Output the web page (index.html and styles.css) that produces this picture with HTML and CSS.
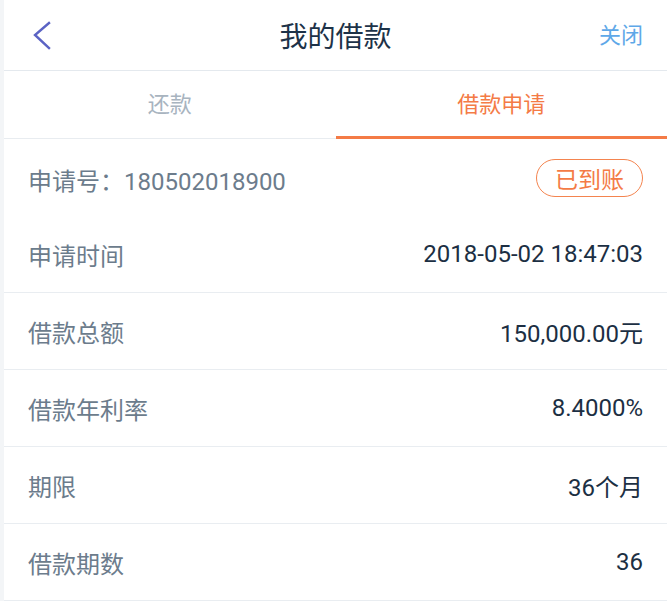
FILE: index.html
```html
<!DOCTYPE html>
<html lang="zh-CN">
<head>
<meta charset="utf-8">
<title>我的借款</title>
<link rel="stylesheet" href="styles.css">
</head>
<body>
<div class="page">
  <header class="nav">
    <span class="back">
      <svg width="20" height="30" viewBox="0 0 20 30"><polyline points="17,2 3,14 17,27" fill="none" stroke="#5b63c4" stroke-width="2.4" stroke-linecap="square" stroke-linejoin="miter"/></svg>
    </span>
    <h1 class="title">我的借款</h1>
    <span class="close">关闭</span>
  </header>
  <nav class="tabs">
    <div class="tab">还款</div>
    <div class="tab active">借款申请</div>
  </nav>
  <section class="list">
    <div class="row first">
      <span class="label">申请号：180502018900</span>
      <span class="badge">已到账</span>
    </div>
    <div class="row">
      <span class="label">申请时间</span>
      <span class="value">2018-05-02 18:47:03</span>
    </div>
    <div class="row">
      <span class="label">借款总额</span>
      <span class="value">150,000.00元</span>
    </div>
    <div class="row">
      <span class="label">借款年利率</span>
      <span class="value">8.4000%</span>
    </div>
    <div class="row">
      <span class="label">期限</span>
      <span class="value">36个月</span>
    </div>
    <div class="row">
      <span class="label">借款期数</span>
      <span class="value">36</span>
    </div>
  </section>
</div>
</body>
</html>
```
FILE: styles.css
```css
html, body {
  margin: 0;
  padding: 0;
  background: #f3f5f7;
  font-family: Roboto, "Noto Sans CJK SC", sans-serif;
}
.page {
  margin-left: 4px;
  background: #ffffff;
  min-height: 601px;
}
.nav {
  border-bottom: 1px solid #e4e9ee;
  display: flex;
  align-items: center;
  justify-content: space-between;
  padding: 0 24px 0 28px;
  position: relative;
  box-sizing: border-box;
  height: 71px;
}
.back {
  display: flex;
  width: 20px;
  height: 30px;
  margin-top: 2px;
}
.title {
  position: absolute;
  left: 0;
  right: 0;
  text-align: center;
  margin: 0;
  font-size: 28px;
  font-weight: 400;
  color: #1d3248;
  pointer-events: none;
  line-height: 1;
  top: 24px;
}
.close {
  font-size: 22px;
  color: #5ea8e8;
  line-height: 1;
  margin-top: 2px;
}
.tabs {
  display: flex;
  height: 67px;
  border-bottom: 1px solid #e8ecf0;
}
.tab {
  flex: 1;
  display: flex;
  align-items: center;
  justify-content: center;
  font-size: 22px;
  color: #a8b4bf;
  box-sizing: border-box;
  border-bottom: 3px solid transparent;
  margin-bottom: -1px;
  padding-bottom: 3px;
}
.tab.active {
  color: #f47b46;
  border-bottom-color: #f47b46;
}
.row {
  height: 76px;
  border-bottom: 1px solid #e9edf1;
  display: flex;
  align-items: center;
  justify-content: space-between;
  padding: 0 24px 0 24px;
  font-size: 24px;
}
.row.first {
  border-bottom: none;
  padding-top: 4px;
  box-sizing: border-box;
  height: 77px;
}
.label {
  color: #6c7c8c;
}
.value {
  color: #1c2f43;
}
.badge {
  border: 1.5px solid #f4844f;
  color: #f47b46;
  font-size: 23px;
  border-radius: 20px;
  height: 38px;
  box-sizing: border-box;
  padding: 0 18px;
  display: flex;
  align-items: center;
  margin-top: -4px;
}
```
